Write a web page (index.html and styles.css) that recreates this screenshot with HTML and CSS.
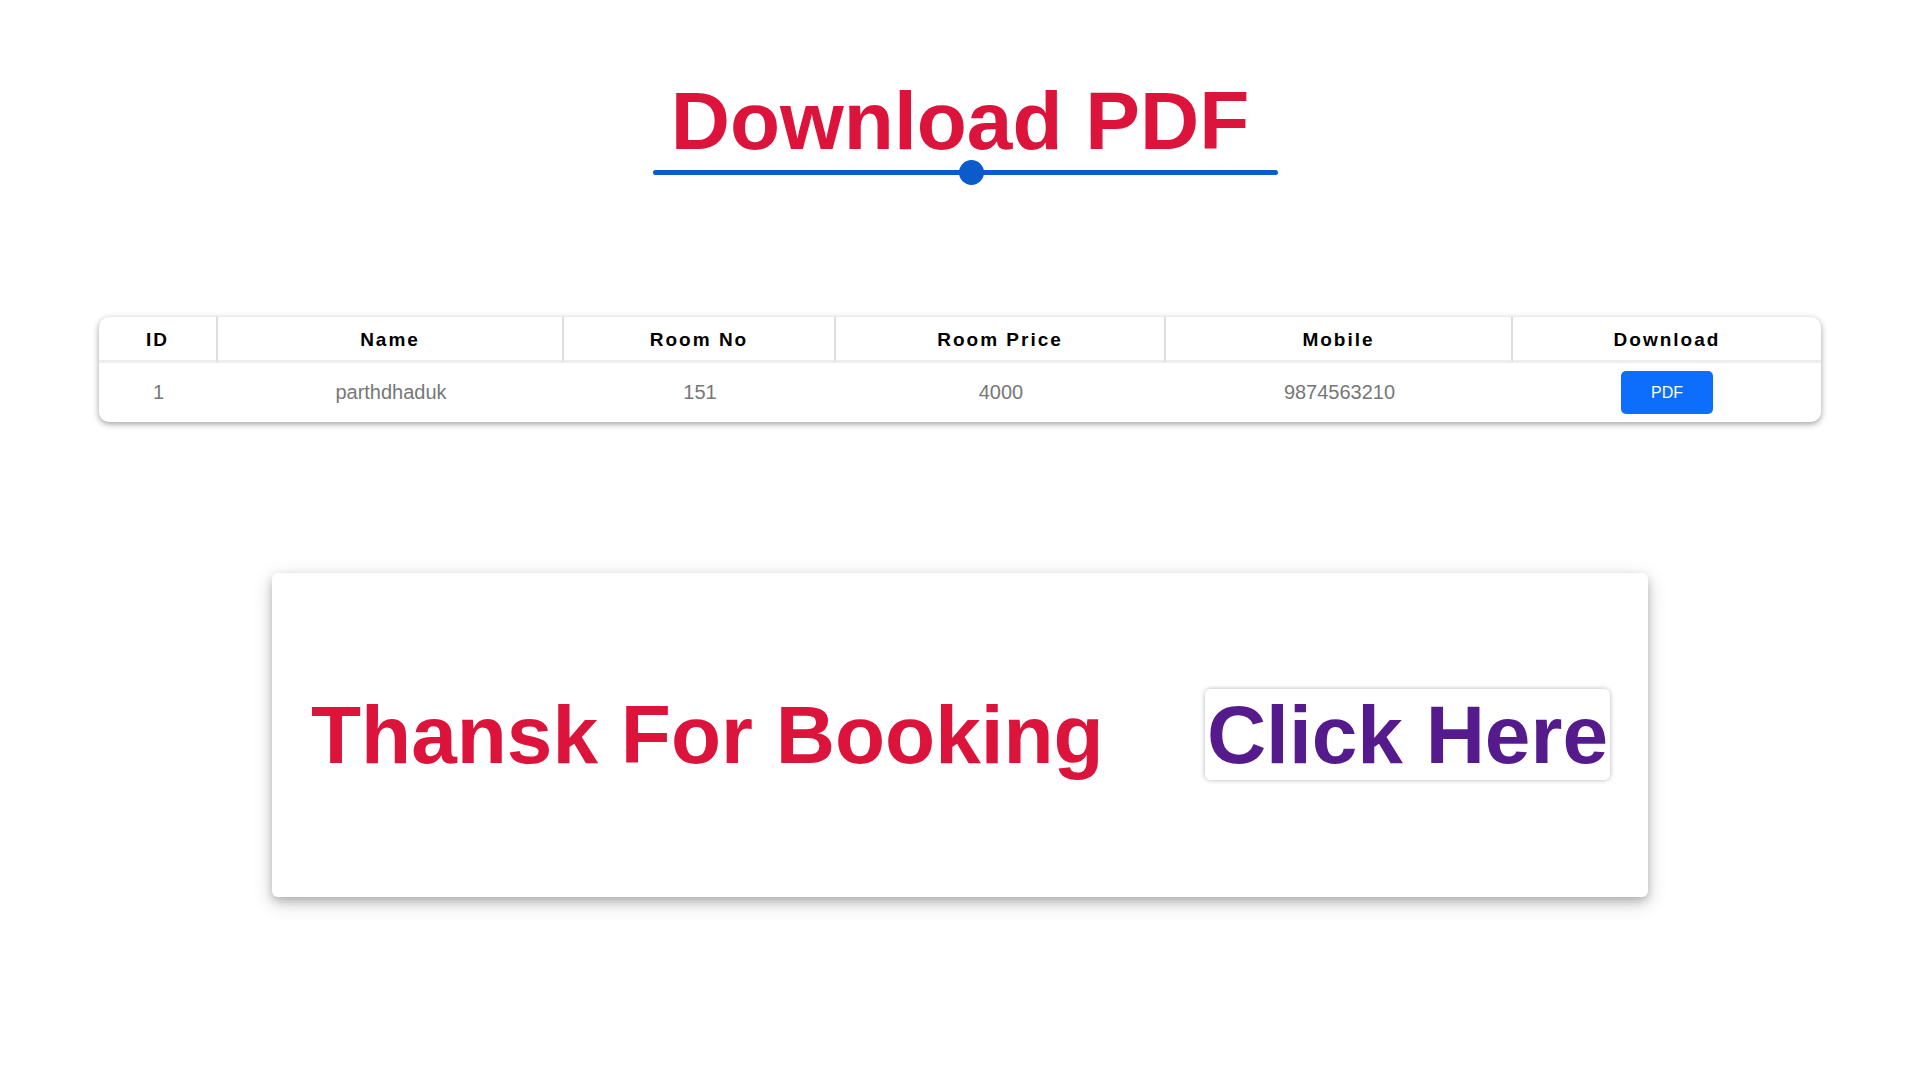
FILE: index.html
```html
<!DOCTYPE html>
<html lang="en">
<head>
<meta charset="utf-8">
<title>Download PDF</title>
<link rel="stylesheet" href="styles.css">
</head>
<body>
<main class="page">
  <header class="hero">
    <h1 class="hero-title">Download PDF</h1>
    <div class="hero-rule"><span class="hero-dot"></span></div>
  </header>

  <section class="table-wrap">
    <table class="booking-table">
      <colgroup>
        <col class="col-id">
        <col class="col-name">
        <col class="col-room">
        <col class="col-price">
        <col class="col-mobile">
        <col class="col-download">
      </colgroup>
      <thead>
        <tr>
          <th>ID</th>
          <th>Name</th>
          <th>Room No</th>
          <th>Room Price</th>
          <th>Mobile</th>
          <th>Download</th>
        </tr>
      </thead>
      <tbody>
        <tr>
          <td>1</td>
          <td>parthdhaduk</td>
          <td>151</td>
          <td>4000</td>
          <td>9874563210</td>
          <td><button class="btn-pdf" type="button">PDF</button></td>
        </tr>
      </tbody>
    </table>
  </section>

  <section class="thanks-card">
    <h2 class="thanks-text">Thansk For Booking</h2>
    <p class="thanks-link-wrap"><a class="thanks-link" href="#">Click Here</a></p>
  </section>
</main>
</body>
</html>
```

FILE: styles.css
```css
html, body {
  margin: 0;
  padding: 0;
  background: #ffffff;
}

body {
  font-family: "Liberation Sans", Arial, sans-serif;
}

.page {
  padding-top: 74px;
  padding-bottom: 60px;
}

.hero-title {
  margin: 0;
  text-align: center;
  font-size: 82px;
  font-weight: 700;
  line-height: normal;
  color: #dc143c;
}

.hero-rule {
  position: relative;
  width: 625px;
  height: 5px;
  margin-top: 2px;
  margin-left: calc(50% - 307px);
  background: #0b5bcc;
  border-radius: 3px;
}

.hero-dot {
  position: absolute;
  left: 306px;
  top: -10px;
  width: 25px;
  height: 25px;
  border-radius: 50%;
  background: #0b5bcc;
}

.table-wrap {
  margin-top: 142px;
  display: flex;
  justify-content: center;
}

.booking-table {
  width: 1722px;
  table-layout: fixed;
  border-collapse: separate;
  border-spacing: 0;
  border-radius: 10px;
  overflow: hidden;
  background: #ffffff;
  box-shadow: 0 2px 6px rgba(0, 0, 0, 0.38);
}

.col-id { width: 119px; }
.col-name { width: 346px; }
.col-room { width: 272px; }
.col-price { width: 330px; }
.col-mobile { width: 347px; }
.col-download { width: 308px; }

.booking-table th {
  padding: 12px 0 10px;
  line-height: 21px;
  font-size: 19px;
  font-weight: 700;
  letter-spacing: 2px;
  color: #000000;
  text-align: center;
  border-bottom: 3px solid #eeeeee;
}

.booking-table th:not(:last-child) {
  border-right: 2px solid #dddddd;
}

.booking-table td {
  padding: 8px 0;
  line-height: 43px;
  font-size: 20px;
  color: #777777;
  text-align: center;
  vertical-align: middle;
}

.btn-pdf {
  display: inline-block;
  vertical-align: top;
  width: 92px;
  height: 43px;
  padding: 0;
  border: none;
  border-radius: 5px;
  background: #0d6efd;
  color: #ffffff;
  font-family: "Liberation Sans", Arial, sans-serif;
  font-size: 16px;
  line-height: 43px;
  cursor: pointer;
}

.thanks-card {
  box-sizing: border-box;
  width: 1376px;
  height: 324px;
  margin: 151px auto 0;
  padding: 0 38px 0 39px;
  display: flex;
  align-items: center;
  justify-content: space-between;
  background: #ffffff;
  border-radius: 6px;
  box-shadow: 0 4px 8px rgba(0, 0, 0, 0.2), 0 6px 20px rgba(0, 0, 0, 0.19);
}

.thanks-text {
  margin: 0;
  font-size: 82px;
  font-weight: 700;
  line-height: normal;
  color: #dc143c;
}

.thanks-link-wrap {
  margin: 0;
  font-size: 82px;
  font-weight: 700;
  line-height: normal;
}

.thanks-link {
  padding: 0 2px;
  color: #551a8b;
  text-decoration: none;
  background: #ffffff;
  border-radius: 6px;
  box-shadow: 0 0 5px rgba(0, 0, 0, 0.3);
}
```
